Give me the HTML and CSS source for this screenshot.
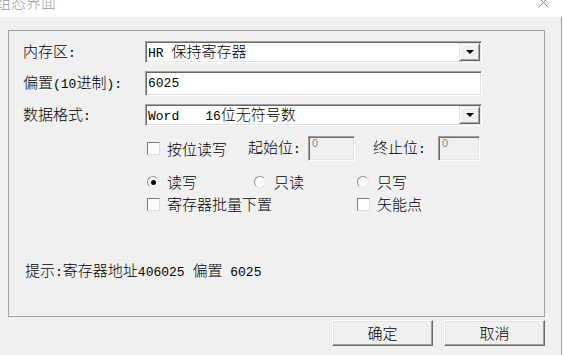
FILE: index.html
```html
<!DOCTYPE html>
<html lang="zh-CN">
<head>
    <meta charset="UTF-8">
    <title>组态界面</title>
    <link rel="stylesheet" href="styles.css">
</head>
<body>
    <div class="window">
        <div class="titlebar">
            <span class="title">组态界面</span>
            <svg class="close" width="11" height="11" viewBox="0 0 11 11">
                <path d="M0.5 0.5 L10.5 10.5 M10.5 0.5 L0.5 10.5" stroke="#858585" stroke-width="1" fill="none"/>
            </svg>
        </div>

        <div class="client">
            <div class="group">
                <div class="field">
                    <span class="label">内存区<span class="en">:</span></span>
                    <div class="combo">
                        <span class="combo-text"><span class="en">HR</span><span class="sub">保持寄存器</span></span>
                        <span class="drop"><i class="arrow"></i></span>
                    </div>
                </div>
                <div class="field">
                    <span class="label">偏置<span class="en">(10</span>进制<span class="en">):</span></span>
                    <div class="edit"><span class="en">6025</span></div>
                </div>
                <div class="field">
                    <span class="label">数据格式<span class="en">:</span></span>
                    <div class="combo">
                        <span class="combo-text"><span class="en">Word</span><span class="sub wide"><span class="en">16</span>位无符号数</span></span>
                        <span class="drop"><i class="arrow"></i></span>
                    </div>
                </div>

                <div class="bit-row">
                    <label class="opt bit-opt"><span class="box"></span>按位读写</label>
                    <span class="bit-label">起始位<span class="en">:</span></span>
                    <div class="bit-box start">0</div>
                    <span class="bit-label end-label">终止位<span class="en">:</span></span>
                    <div class="bit-box end">0</div>
                </div>

                <div class="radio-row">
                    <label class="opt radio-first"><span class="radio checked"></span>读写</label>
                    <label class="opt radio-second"><span class="radio"></span>只读</label>
                    <label class="opt"><span class="radio"></span>只写</label>
                </div>

                <div class="check-row">
                    <label class="opt check-first"><span class="box"></span>寄存器批量下置</label>
                    <label class="opt"><span class="box"></span>矢能点</label>
                </div>

                <p class="hint">提示<span class="en">:</span>寄存器地址<span class="en">406025 </span>偏置<span class="en"> 6025</span></p>
            </div>

            <div class="buttons">
                <button class="btn">确定</button>
                <button class="btn">取消</button>
            </div>
        </div>
    </div>
</body>
</html>
```

FILE: styles.css
```css
/* Reset */
* {
    margin: 0;
    padding: 0;
    box-sizing: border-box;
}

body {
    width: 563px;
    height: 355px;
    overflow: hidden;
    background-color: #ffffff;
    font-family: "Noto Sans CJK SC", sans-serif;
    font-size: 15px;
    font-weight: 300;
    line-height: 18px;
    color: #000000;
}

.en {
    font-family: "Liberation Mono", monospace;
    font-size: 13px;
    font-weight: 400;
    white-space: pre;
}

/* Window frame */
.window {
    width: 562px;
    height: 355px;
    display: flex;
    flex-direction: column;
}

.titlebar {
    height: 17px;
    flex-shrink: 0;
    display: flex;
    overflow: hidden;
    background-color: #ffffff;
}

.title {
    height: 15px;
    margin: -6px 0 0 -4px;
    font-size: 15px;
    line-height: 15px;
    color: #9a9a9a;
}

.close {
    margin: -3px 13px 0 auto;
}

.client {
    flex: 1;
    padding: 13px 0 0 8px;
    background-color: #f0f0f0;
    border-right: 1px solid #a0a0a0;
}

/* Group box */
.group {
    width: 537px;
    height: 287px;
    padding: 10px 0 0 14px;
    border: 1px solid #a0a0a0;
}

.field {
    display: flex;
    align-items: center;
}

.field + .field {
    margin-top: 8px;
}

.label {
    width: 122px;
}

.combo,
.edit,
.bit-box {
    height: 22px;
    border: 1px solid;
    border-color: #a0a0a0 #ffffff #ffffff #a0a0a0;
    box-shadow: inset 1px 1px 0 #696969, inset -1px -1px 0 #e3e3e3;
}

.combo,
.edit {
    width: 337px;
    display: flex;
    align-items: center;
    padding: 1px 1px 1px 2px;
    background-color: #ffffff;
}

.edit {
    height: 25px;
}

.combo-text {
    flex: 1;
    white-space: nowrap;
}

.sub {
    margin-left: 8px;
}

.sub.wide {
    margin-left: 26px;
}

.drop {
    width: 21px;
    height: 18px;
    display: flex;
    align-items: center;
    justify-content: center;
    background-color: #f0f0f0;
    border: 1px solid;
    border-color: #e3e3e3 #696969 #696969 #e3e3e3;
    box-shadow: inset 1px 1px 0 #ffffff, inset -1px -1px 0 #a0a0a0;
}

.arrow {
    width: 0;
    height: 0;
    border-left: 4px solid transparent;
    border-right: 4px solid transparent;
    border-top: 4px solid #000000;
}

/* Option rows */
.bit-row,
.radio-row,
.check-row {
    display: flex;
    align-items: center;
    margin-left: 124px;
}

.bit-row {
    height: 25px;
    margin-top: 10px;
}

.radio-row {
    height: 18px;
    margin-top: 12px;
}

.check-row {
    height: 18px;
    margin-top: 4px;
}

.opt {
    display: flex;
    align-items: center;
    white-space: nowrap;
}

.bit-opt {
    width: 101px;
}

.bit-label {
    width: 60px;
}

.bit-label.end-label {
    width: 65px;
}

.bit-box {
    height: 25px;
    padding: 0 0 0 3px;
    font-family: "Liberation Sans", sans-serif;
    font-size: 11px;
    font-weight: 400;
    line-height: 12px;
    color: #858585;
    background-color: #f0f0f0;
}

.bit-box.start {
    width: 47px;
    margin-right: 18px;
}

.bit-box.end {
    width: 42px;
}

.radio-first {
    width: 107px;
}

.radio-second {
    width: 103px;
}

.check-first {
    width: 210px;
}

.box {
    width: 13px;
    height: 13px;
    margin-right: 7px;
    background-color: #ffffff;
    border: 1px solid;
    border-color: #7a7a7a #dcdcdc #dcdcdc #7a7a7a;
}

.radio {
    width: 12px;
    height: 12px;
    margin-right: 8px;
    display: flex;
    align-items: center;
    justify-content: center;
    border-radius: 50%;
    background-color: #ffffff;
    border: 1px solid;
    border-color: #8a8a8a #e3e3e3 #e3e3e3 #8a8a8a;
}

.radio.checked::after {
    content: "";
    width: 5px;
    height: 5px;
    border-radius: 50%;
    background-color: #000000;
}

.hint {
    margin: 48px 0 0 2px;
}

/* Dialog buttons */
.buttons {
    width: 537px;
    margin-top: 3px;
    display: flex;
    justify-content: flex-end;
    gap: 11px;
}

.btn {
    width: 101px;
    height: 26px;
    font: inherit;
    line-height: 18px;
    color: #000000;
    background-color: #f0f0f0;
    border: 1px solid;
    border-color: #ffffff #696969 #696969 #ffffff;
    box-shadow: inset -1px -1px 0 #a0a0a0, inset 1px 1px 0 #e3e3e3;
}
```
